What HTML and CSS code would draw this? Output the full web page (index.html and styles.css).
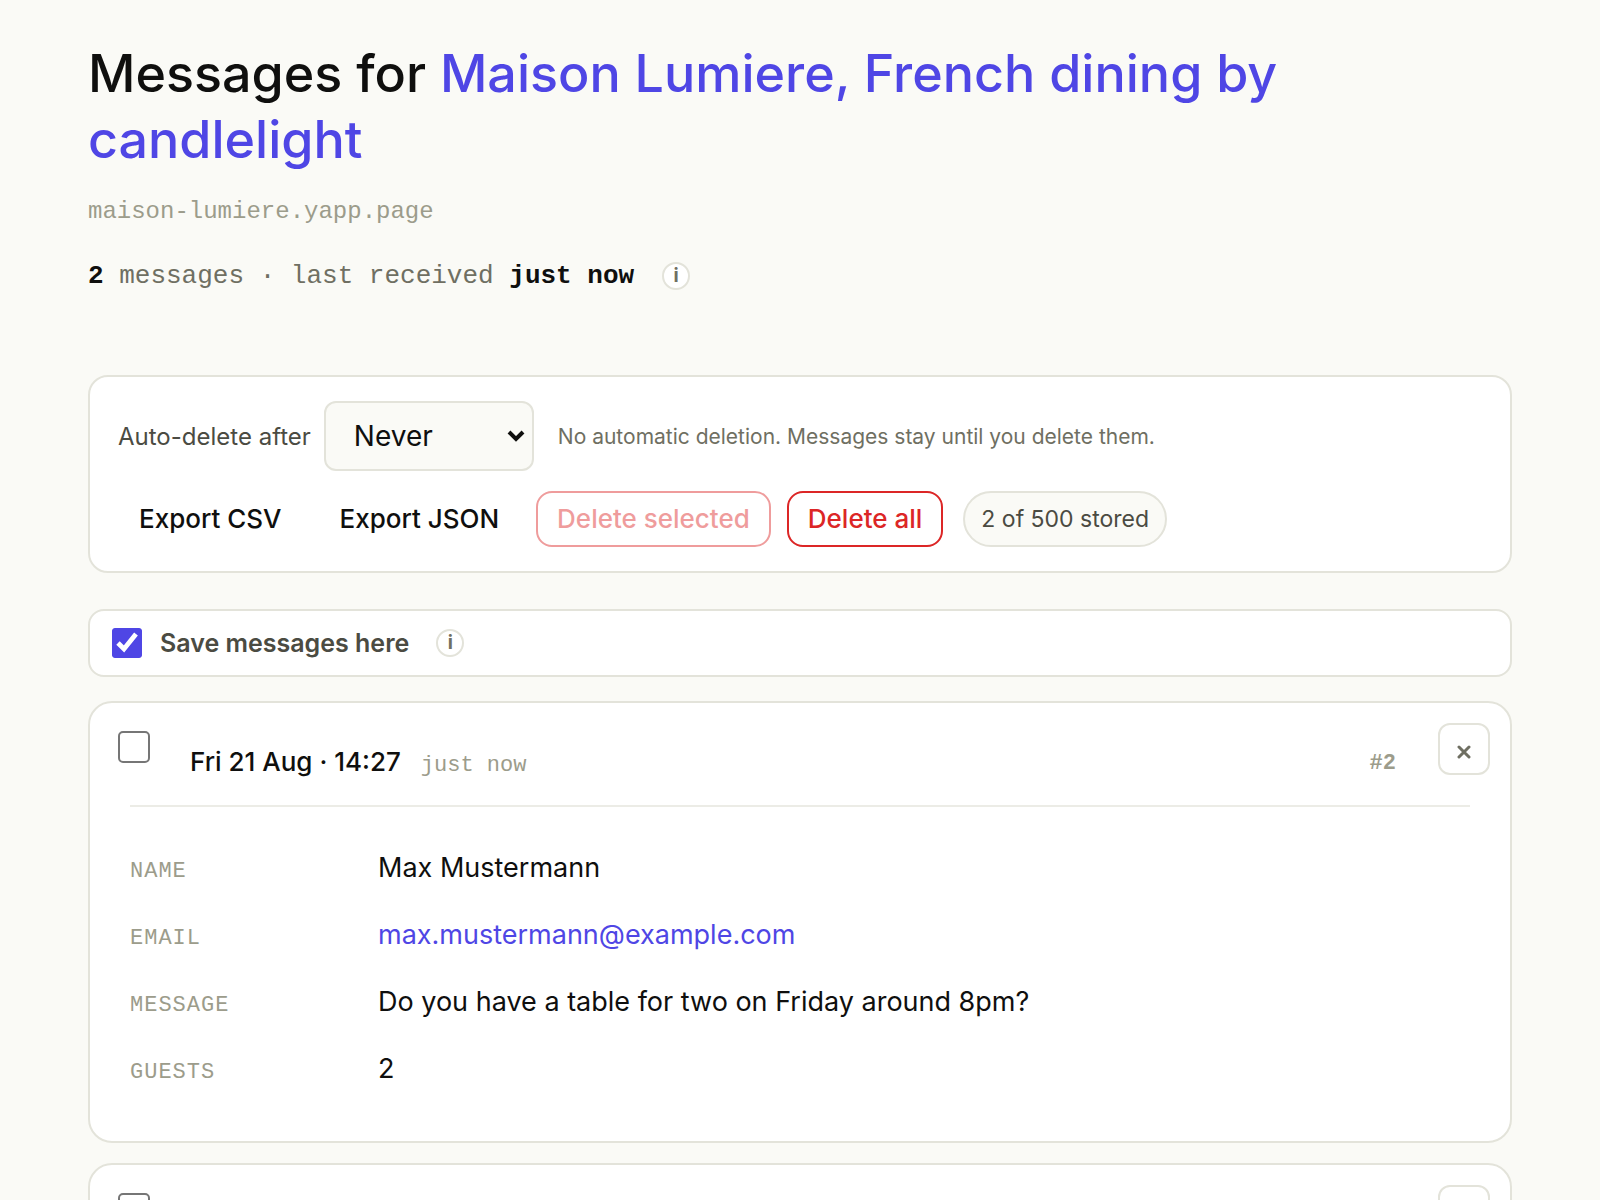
FILE: index.html
```html
<!DOCTYPE html>
<html lang="en">
<head>
<meta charset="utf-8">
<meta name="viewport" content="width=device-width, initial-scale=1">
<title>Messages for Maison Lumiere</title>
<link rel="stylesheet" href="styles.css">
</head>
<body>
<main class="page">
  <header class="intro">
    <h1 class="title">Messages for <span class="site-name">Maison Lumiere, French dining by candlelight</span></h1>
    <p class="site-url">maison-lumiere.yapp.page</p>
    <p class="summary"><span><strong>2</strong> messages · last received <strong>just now</strong></span><button class="info" type="button">i</button></p>
  </header>

  <section class="toolbar">
    <div class="retention">
      <label class="retention-label" for="retention">Auto-delete after</label>
      <span class="select-wrap">
        <select class="select" id="retention">
          <option>Never</option>
        </select>
        <svg class="chevron" viewBox="0 0 18 12" aria-hidden="true"><path d="M2 2l7 7 7-7"/></svg>
      </span>
      <span class="hint">No automatic deletion. Messages stay until you delete them.</span>
    </div>
    <div class="actions">
      <button class="btn" type="button">Export CSV</button>
      <button class="btn" type="button">Export JSON</button>
      <button class="btn btn-danger" type="button" disabled>Delete selected</button>
      <button class="btn btn-danger" type="button">Delete all</button>
      <span class="badge">2 of 500 stored</span>
    </div>
  </section>

  <section class="save">
    <input class="save-check" type="checkbox" id="save" checked>
    <label class="save-label" for="save">Save messages here</label>
    <button class="info" type="button">i</button>
  </section>

  <section class="messages">
    <article class="message">
      <div class="message-head">
        <input class="pick" type="checkbox" aria-label="Select message 2">
        <p class="when"><time class="date">Fri 21 Aug · 14:27</time><span class="ago">just now</span></p>
        <span class="number">#2</span>
        <button class="close" type="button" aria-label="Delete message 2"><svg class="cross" viewBox="0 0 14 14" aria-hidden="true"><path d="M2 2l10 10M12 2L2 12"/></svg></button>
      </div>
      <dl class="fields">
        <dt>NAME</dt><dd>Max Mustermann</dd>
        <dt>EMAIL</dt><dd><a class="mail" href="mailto:max.mustermann@example.com">max.mustermann@example.com</a></dd>
        <dt>MESSAGE</dt><dd>Do you have a table for two on Friday around 8pm?</dd>
        <dt>GUESTS</dt><dd>2</dd>
      </dl>
    </article>
    <article class="message">
      <div class="message-head">
        <input class="pick" type="checkbox" aria-label="Select message 1">
        <button class="close" type="button" aria-label="Delete message 1"><svg class="cross" viewBox="0 0 14 14" aria-hidden="true"><path d="M2 2l10 10M12 2L2 12"/></svg></button>
      </div>
    </article>
  </section>
</main>
</body>
</html>
```

FILE: styles.css
```css
:root {
  --paper: #fafaf6;
  --line: #e3e3da;
  --ink: #0f0f0e;
  --ink-2: #4b4b42;
  --ink-3: #6f6f62;
  --ink-4: #9c9c8b;
  --accent: #4f46e5;
  --danger: #dc2626;
  --sans: Inter, "Liberation Sans", sans-serif;
  --mono: "Liberation Mono", monospace;
}

* { box-sizing: border-box; }

body {
  margin: 0;
  background: var(--paper);
  color: var(--ink);
  font-family: var(--sans);
}

h1, p, dl, dd { margin: 0; }

button, select, input { margin: 0; font: inherit; color: inherit; }

.page {
  height: 100vh;
  overflow-y: auto;
  scrollbar-width: none;
  padding: 41px 88px 0;
}

.title {
  font-size: 52px;
  line-height: 66px;
  font-weight: 500;
}

.site-name { color: var(--accent); }

.site-url {
  margin-top: 22px;
  font: 24px/34px var(--mono);
  color: var(--ink-4);
}

.summary {
  display: flex;
  align-items: center;
  gap: 28px;
  margin-top: 27px;
  font: 26px/40px var(--mono);
  color: var(--ink-3);
}

.summary strong { color: var(--ink); }

.info {
  width: 28px;
  height: 28px;
  padding: 0;
  border: 2px solid var(--line);
  border-radius: 50%;
  background: #fff;
  font: 700 19px/22px var(--sans);
  color: var(--ink-3);
}

.toolbar {
  display: flex;
  flex-direction: column;
  gap: 20px;
  margin-top: 79px;
  padding: 24px 28px;
  border: 2px solid var(--line);
  border-radius: 20px;
  background: #fff;
}

.retention { display: flex; align-items: center; }

.retention-label { font-size: 24px; color: var(--ink-2); }

.select-wrap { position: relative; margin: 0 24px 0 13px; }

.select {
  display: block;
  width: 210px;
  height: 70px;
  padding: 0 28px;
  appearance: none;
  border: 2px solid var(--line);
  border-radius: 12px;
  background: var(--paper);
  font-size: 28px;
}

.chevron {
  position: absolute;
  right: 9px;
  top: 29px;
  width: 18px;
  height: 12px;
  fill: none;
  stroke: var(--ink);
  stroke-width: 4;
  pointer-events: none;
}

.hint { font-size: 21px; color: var(--ink-3); }

.actions { display: flex; align-items: center; gap: 16px; }

.btn {
  height: 56px;
  padding: 0 19px 2px;
  border: 2px solid transparent;
  border-radius: 16px;
  background: #fff;
  font-size: 26px;
  font-weight: 500;
}

.btn-danger { border-color: var(--danger); color: var(--danger); }

.btn:disabled { opacity: 0.45; }

.badge {
  margin-left: 4px;
  padding: 0 16px;
  border: 2px solid var(--line);
  border-radius: 28px;
  background: var(--paper);
  font-size: 23px;
  line-height: 52px;
  color: var(--ink-2);
}

.save {
  display: flex;
  align-items: center;
  margin-top: 36px;
  padding: 17px 22px;
  border: 2px solid var(--line);
  border-radius: 16px;
  background: #fff;
}

.save-check {
  width: 30px;
  height: 30px;
  accent-color: var(--accent);
  clip-path: inset(0 round 3px);
}

.save-label {
  margin: 0 27px 0 18px;
  font-size: 25px;
  line-height: 30px;
  font-weight: 600;
  color: var(--ink-2);
}

.messages {
  display: flex;
  flex-direction: column;
  gap: 20px;
  margin-top: 24px;
}

.message {
  border: 2px solid var(--line);
  border-radius: 24px;
  background: #fff;
}

.message-head {
  display: flex;
  align-items: flex-end;
  padding: 20px 20px 24px 28px;
}

.pick {
  align-self: flex-start;
  width: 32px;
  height: 32px;
  margin: 8px 40px 0 0;
  appearance: none;
  border: 2px solid #767676;
  border-radius: 5px;
  background: #fff;
}

.when { display: flex; align-items: baseline; gap: 20px; line-height: 30px; }

.date { font-size: 26px; font-weight: 500; }

.ago { font: 22px/30px var(--mono); color: var(--ink-4); }

.number {
  margin: 0 42px 0 auto;
  font: bold 22px/34px var(--mono);
  color: var(--ink-4);
}

.close {
  display: grid;
  place-items: center;
  width: 52px;
  height: 52px;
  margin: 0 0 6px auto;
  padding: 6px 0 0;
  border: 2px solid var(--line);
  border-radius: 12px;
  background: #fff;
}

.number + .close { margin-left: 0; }

.cross {
  width: 14px;
  height: 14px;
  fill: none;
  stroke: var(--ink-3);
  stroke-width: 3;
  stroke-linecap: round;
}

.fields {
  display: grid;
  grid-template-columns: 248px 1fr;
  align-items: baseline;
  row-gap: 25px;
  margin: 0 40px;
  padding: 40px 0 51px;
  border-top: 2px solid #ecece6;
}

.fields dt {
  font: 22px/30px var(--mono);
  letter-spacing: 1px;
  color: var(--ink-4);
}

.fields dd { font-size: 27px; line-height: 42px; }

.mail { color: var(--accent); text-decoration: none; }
```
